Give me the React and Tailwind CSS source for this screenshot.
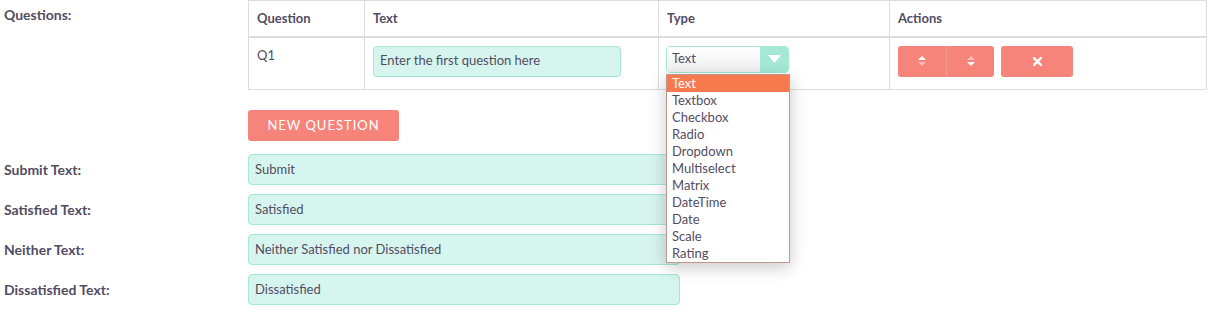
import React from 'react';

const types = ['Text', 'Textbox', 'Checkbox', 'Radio', 'Dropdown', 'Multiselect', 'Matrix', 'DateTime', 'Date', 'Scale', 'Rating'];

const fields = [
  { label: 'Submit Text:', value: 'Submit' },
  { label: 'Satisfied Text:', value: 'Satisfied' },
  { label: 'Neither Text:', value: 'Neither Satisfied nor Dissatisfied' },
  { label: 'Dissatisfied Text:', value: 'Dissatisfied' },
];

const SortIcon = ({ up }) => (
  <svg width="8" height="10" viewBox="0 0 8 10">
    <path d="M4 0 L8 4 L0 4 Z" fill="white" fillOpacity={up ? 1 : 0.45} />
    <path d="M4 10 L8 6 L0 6 Z" fill="white" fillOpacity={up ? 0.45 : 1} />
  </svg>
);

const CloseIcon = () => (
  <svg width="9" height="9" viewBox="0 0 9 9">
    <path d="M1 1 L8 8 M8 1 L1 8" stroke="white" strokeWidth="2.4" strokeLinecap="square" />
  </svg>
);

const App = () => {
  return (
    <div className="w-[1213px] h-[315px] bg-white text-[13px] text-[#534d64] font-['Lato','Open_Sans',sans-serif] overflow-hidden">
      {/* Questions row */}
      <div className="flex">
        <div className="w-[248px] pl-[4px] pt-[4px] font-bold text-[14px]">Questions:</div>
        <div className="w-[959px]">
          <table className="w-full border-collapse border border-[#dddddd] table-fixed">
            <thead>
              <tr className="border-b-2 border-[#dddddd] h-[36px]">
                <th className="w-[116px] border-r border-[#dddddd] text-left font-bold px-[8px]">Question</th>
                <th className="w-[294px] border-r border-[#dddddd] text-left font-bold px-[8px]">Text</th>
                <th className="w-[231px] border-r border-[#dddddd] text-left font-bold px-[8px]">Type</th>
                <th className="text-left font-bold px-[8px]">Actions</th>
              </tr>
            </thead>
            <tbody>
              <tr className="h-[53px] border-b border-[#dddddd]">
                <td className="border-r border-[#dddddd] align-top px-[8px] pt-[8px]">Q1</td>
                <td className="border-r border-[#dddddd] align-top px-[8px] pt-[8px]">
                  <div className="w-[248px] h-[31px] rounded-[4px] border border-[#a5e8d6] bg-[#d6f5ee] flex items-center px-[6px]">
                    Enter the first question here
                  </div>
                </td>
                <td className="border-r border-[#dddddd] align-top pl-[7px] pr-[8px] pt-[8px]">
                  <div className="relative w-[123px]">
                    <div className="h-[27px] flex rounded-[4px] border border-[#a5e8d6] overflow-hidden">
                      <div className="flex-1 flex items-center pl-[5px] bg-gradient-to-b from-white to-[#f0f0f0]">Text</div>
                      <div className="w-[28px] bg-[#a5e8d6] flex items-center justify-center">
                        <svg width="13" height="8" viewBox="0 0 13 8">
                          <path d="M0 0 L13 0 L6.5 8 Z" fill="white" />
                        </svg>
                      </div>
                    </div>
                    <div className="absolute left-0 top-[28px] w-[124px] bg-white border border-[#c2978b] shadow-[0_4px_16px_rgba(0,0,0,0.22)] z-10">
                      {types.map((t, i) => (
                        <div
                          key={t}
                          className={`h-[17px] leading-[17px] pl-[5px] ${i === 0 ? 'bg-[#f7794e] text-white' : ''}`}
                        >
                          {t}
                        </div>
                      ))}
                    </div>
                  </div>
                </td>
                <td className="align-top px-[8px] pt-[8px]">
                  <div className="flex">
                    <button className="w-[48px] h-[31px] bg-[#f7847a] rounded-l-[3px] flex items-center justify-center">
                      <SortIcon up />
                    </button>
                    <button className="w-[48px] h-[31px] bg-[#f7847a] rounded-r-[3px] border-l border-[#f99a91] flex items-center justify-center">
                      <SortIcon />
                    </button>
                    <button className="ml-[7px] w-[72px] h-[31px] bg-[#f7847a] rounded-[3px] flex items-center justify-center">
                      <CloseIcon />
                    </button>
                  </div>
                </td>
              </tr>
            </tbody>
          </table>
        </div>
      </div>

      {/* New question button */}
      <div className="pl-[248px] pt-[20px]">
        <button className="w-[151px] h-[31px] bg-[#f7847a] rounded-[3px] text-white text-[13px] tracking-[1px] uppercase">
          New Question
        </button>
      </div>

      {/* Text fields */}
      <div className="pt-[13px] flex flex-col gap-[9px]">
        {fields.map((f) => (
          <div key={f.label} className="flex items-center">
            <div className="w-[248px] pl-[4px] font-bold text-[14px]">{f.label}</div>
            <div className="w-[432px] h-[31px] rounded-[4px] border border-[#a5e8d6] bg-[#d6f5ee] flex items-center px-[6px]">
              {f.value}
            </div>
          </div>
        ))}
      </div>
    </div>
  );
};

export default App;
